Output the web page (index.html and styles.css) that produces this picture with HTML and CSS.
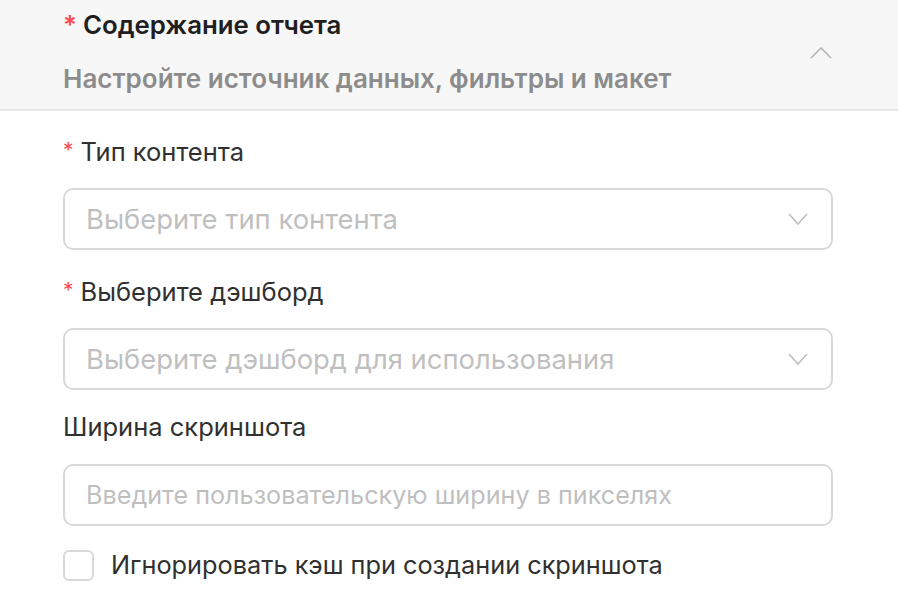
FILE: index.html
```html
<!DOCTYPE html>
<html lang="ru">
<head>
    <meta charset="UTF-8">
    <meta name="viewport" content="width=device-width, initial-scale=1.0">
    <title>Содержание отчета</title>
    <link rel="stylesheet" href="styles.css">
</head>
<body>
    <div class="panel-head">
        <div class="head-text">
            <div class="head-title"><span class="req">*</span>Содержание отчета</div>
            <div class="head-sub">Настройте источник данных, фильтры и макет</div>
        </div>
        <svg class="head-arrow" width="22" height="13" viewBox="0 0 22 13">
            <polyline points="1,12 11,2 21,12" fill="none" stroke="#b5b5b5" stroke-width="1.6"/>
        </svg>
    </div>

    <div class="panel-body">
        <div class="field field-first">
            <div class="label"><span class="req-sm">*</span>Тип контента</div>
            <div class="select">
                <span class="ph">Выберите тип контента</span>
                <svg width="20" height="13" viewBox="0 0 20 13">
                    <polyline points="1,1 10,11 19,1" fill="none" stroke="#bfbfbf" stroke-width="1.6"/>
                </svg>
            </div>
        </div>

        <div class="field">
            <div class="label"><span class="req-sm">*</span>Выберите дэшборд</div>
            <div class="select">
                <span class="ph">Выберите дэшборд для использования</span>
                <svg width="20" height="13" viewBox="0 0 20 13">
                    <polyline points="1,1 10,11 19,1" fill="none" stroke="#bfbfbf" stroke-width="1.6"/>
                </svg>
            </div>
        </div>

        <div class="field field-plain">
            <div class="label">Ширина скриншота</div>
            <div class="input">
                <span class="ph ph-input">Введите пользовательскую ширину в пикселях</span>
            </div>
        </div>

        <label class="check-row">
            <span class="checkbox"></span>
            <span class="check-text">Игнорировать кэш при создании скриншота</span>
        </label>
    </div>
</body>
</html>
```

FILE: styles.css
```css
body{
    margin: 0;
    background: #fff;
    font-family: Inter, "Noto Sans", "Liberation Sans", sans-serif;
    color: #303030;
}
.panel-head{
    display: flex;
    align-items: center;
    justify-content: space-between;
    padding: 8px 65px 13px 63px;
    background: #f7f7f7;
    border-bottom: 2px solid #e8e8e8;
}
.head-title{
    font-size: 25.8px;
    line-height: 34px;
    font-weight: 600;
    color: #1f1f1f;
    margin-bottom: 20px;
}
.req{
    color: #ff4d4f;
    margin-right: 6px;
}
.head-sub{
    font-size: 26px;
    line-height: 34px;
    font-weight: 600;
    color: #8c8c8c;
}
.head-arrow{
    margin-right: 1px;
}
.panel-body{
    padding: 0 65px 0 63px;
}
.field{
    margin-top: 26px;
}
.field-first{
    margin-top: 25px;
}
.field-plain{
    margin-top: 21px;
}
.field-plain .label{
    margin-bottom: 21px;
}
.label{
    font-size: 25.5px;
    line-height: 32px;
    color: #303030;
    margin-bottom: 20px;
}
.req-sm{
    display: inline-block;
    vertical-align: top;
    line-height: 1;
    margin-top: 4px;
    color: #ff4d4f;
    font-size: 21px;
    margin-right: 7px;
}
.select,
.input{
    display: flex;
    align-items: center;
    justify-content: space-between;
    height: 62px;
    box-sizing: border-box;
    padding: 0 23px 0 21px;
    border: 2px solid #d9d9d9;
    border-radius: 10px;
}
.ph{
    font-size: 27.4px;
    color: #bfbfbf;
}
.ph-input{
    font-size: 25.2px;
}
.check-row{
    display: flex;
    align-items: center;
    margin-top: 23px;
}
.checkbox{
    width: 31px;
    height: 31px;
    box-sizing: border-box;
    border: 2px solid #d9d9d9;
    border-radius: 6px;
    margin-right: 17px;
}
.check-text{
    font-size: 25.3px;
    line-height: 32px;
    color: #303030;
}
```
